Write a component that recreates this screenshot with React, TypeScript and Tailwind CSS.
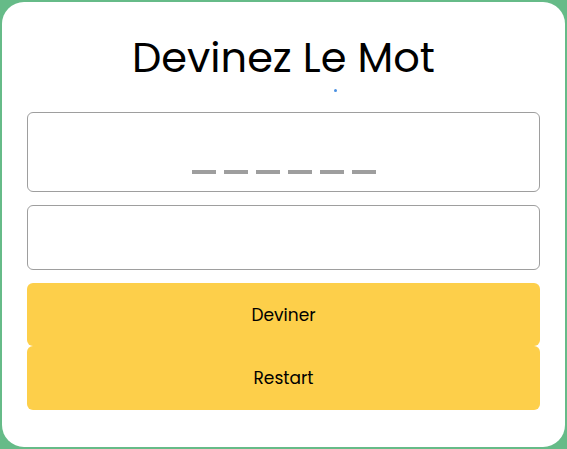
export default function App() {
  const dashes = [0, 1, 2, 3, 4, 5];

  return (
    <div className="w-[567px] h-[449px] bg-[#66bb88] p-[2px] font-['Poppins','Noto_Sans',sans-serif]">
      <div className="h-full bg-white rounded-[22px] px-[25px] pt-[24px] flex flex-col">
        <h1 className="text-[41.5px] leading-[63px] text-black text-center">Devinez Le Mot</h1>

        {/* tiny marker dot */}
        <div className="h-[23px] relative">
          <span className="absolute left-[307px] top-[0px] w-[3px] h-[3px] rounded-full bg-[#4a90e2]" />
        </div>

        {/* word display */}
        <div className="h-[80px] border border-[#9e9e9e] rounded-[6px] flex items-end justify-center pb-[17px]">
          <div className="flex gap-[8px]">
            {dashes.map((d) => (
              <span key={d} className="w-[24px] h-[4px] bg-[#9e9e9e]" />
            ))}
          </div>
        </div>

        <input className="mt-[13px] h-[65px] border border-[#9e9e9e] rounded-[6px] outline-none px-3" />

        <button className="mt-[13px] h-[63px] pt-[3px] bg-[#fdcf4a] rounded-[6px] text-[17px] text-black">
          Deviner
        </button>
        <button className="h-[64px] pt-[2px] bg-[#fdcf4a] rounded-[6px] text-[17px] text-black">
          Restart
        </button>
      </div>
    </div>
  );
}
